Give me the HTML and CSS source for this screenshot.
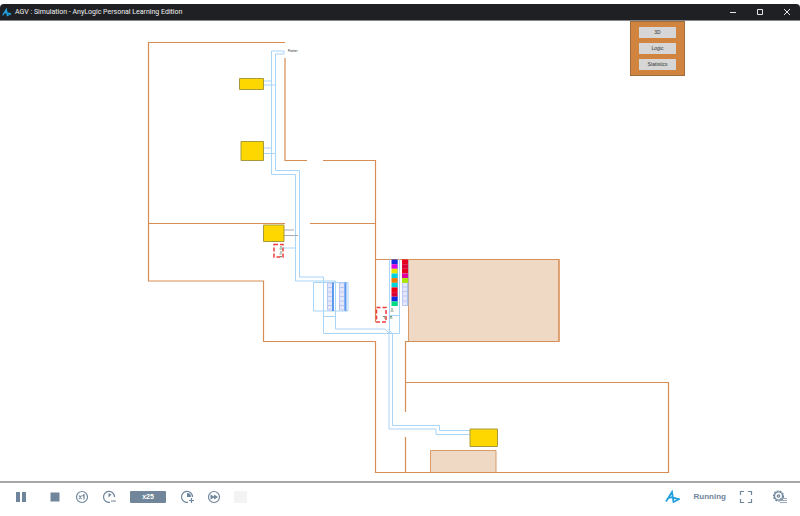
FILE: index.html
```html
<!DOCTYPE html>
<html lang="en">
<head>
  <meta charset="UTF-8">
  <title>AGV : Simulation</title>
  <link rel="stylesheet" href="styles.css">
</head>
<body>

  <header class="titlebar">
    <svg class="logo-small" viewBox="0 0 16 14"><path d="M1 11.5L7 2L8.5 12L14.5 9C10 9 8 6 3.5 8"/></svg>
    <h1>AGV : Simulation - AnyLogic Personal Learning Edition</h1>
    <div class="window-buttons">
      <button aria-label="Minimize"><svg viewBox="0 0 8 8"><path d="M1 4.5h6"/></svg></button>
      <button aria-label="Maximize"><svg viewBox="0 0 8 8"><path d="M1.5 1.5h5v5h-5z"/></svg></button>
      <button aria-label="Close"><svg viewBox="0 0 8 8"><path d="M1 1l6 6M7 1l-6 6"/></svg></button>
    </div>
  </header>

  <main class="stage">
    <svg class="plan" viewBox="0 21 800 460">
      <!-- storage areas -->
      <g class="area">
        <path d="M408.5 259.5H559v82H408.5z"/>
        <path d="M430.5 450.5H496v22h-65.5z"/>
      </g>

      <!-- walls -->
      <g class="wall">
        <path d="M285 42.5H148.5V281H263.5V341.5H375.5V472.5H668.5V382.5H405.5"/>
        <path d="M285 58V160.5H307M323 160.5H375.5V322"/>
        <path d="M148 223.5H285M310 223.5H375"/>
        <path d="M375 259.5H559V341.5H405.5V412M405.5 437V472"/>
      </g>

      <!-- AGV paths -->
      <g class="track">
        <path d="M284 51H271.5V174.5H295.5V281H335.5V329H385L389 333V429H436V434.5H470"/>
        <path d="M284 51V54H275.5V170.5H299.5V277H323.5V333.5H399.5V259"/>
        <path d="M388 329L392.5 334V425.5H439.5V430.5H470"/>
        <path d="M263 81H271M263 85H275M263 148H271M263 153.5H275M283 248H295"/>
        <path d="M313.5 282.5H348V311H313.5zM323 316.5H335M389.5 259V333M389 315.5H399"/>
      </g>
      <path class="dock-line" d="M284 230H294M284 235.5H298"/>

      <!-- stations -->
      <g class="station">
        <path d="M239.5 78.5h24v11h-24z"/>
        <path d="M241 141.5h22.5v19H241z"/>
        <path d="M263.5 225H284v16.5h-20.5z"/>
        <path d="M470 429h27.5v17.5H470z"/>
      </g>

      <!-- racks -->
      <g class="rack">
        <path d="M327.5 283h5v27h-5zM339.5 283h5v27h-5z"/>
        <path d="M327 287.5h6M327 292h6M327 296.5h6M327 301h6M327 305.5h6M339 287.5h6M339 292h6M339 296.5h6M339 301h6M339 305.5h6"/>
        <path class="rack-side" d="M333 282.5V311M345.5 282.5V311"/>
        <path d="M402.5 282.5h5v23h-5zM402 287h6M402 291.5h6M402 296h6M402 301h6"/>
        <path class="rack-edge" d="M408 259.5V306M397.5 259.5V306"/>
      </g>
      <g class="cells">
        <path fill="#1428e0" d="M391.5 259.5h6v4.7h-6z"/>
        <path fill="#dc00dc" d="M391.5 264.2h6v4.6h-6z"/>
        <path fill="#e6e600" d="M391.5 268.8h6v4.7h-6z"/>
        <path fill="#00d2dc" d="M391.5 273.5h6v4.6h-6z"/>
        <path fill="#f07800" d="M391.5 278.1h6v4.7h-6z"/>
        <path fill="#00d2dc" d="M391.5 282.8h6v4.6h-6z"/>
        <path fill="#f00014" d="M391.5 287.4h6v4.7h-6z"/>
        <path fill="#dc0032" d="M391.5 292.1h6v4.6h-6z"/>
        <path fill="#1428e0" d="M391.5 296.7h6v4.7h-6z"/>
        <path fill="#00dc82" d="M391.5 301.4h6v4.6h-6z"/>
        <path fill="#e6001e" d="M402 259.5h6v4.7h-6z"/>
        <path fill="#dc0032" d="M402 264.2h6v4.6h-6z"/>
        <path fill="#e6001e" d="M402 268.8h6v4.7h-6z"/>
        <path fill="#dc00a0" d="M402 273.5h6v4.6h-6z"/>
        <path fill="#aae600" d="M402 278.1h6v4.7h-6z"/>
      </g>

      <!-- worker zones -->
      <path class="zone" d="M274 244.5h9V257h-9zM376.5 307.5h9.5V322h-9.5z"/>
      <path class="worker" d="M280 247h2M279.5 249h3M280 252h2M279.5 254h2M280 256.5h2M391 309h2M390.5 311h3M383 316.5h2M384 318h2M390 316.5h2M389.5 318h3"/>

      <text class="note" x="288" y="52">Pointer</text>
    </svg>

    <nav class="views">
      <button>3D</button>
      <button>Logic</button>
      <button>Statistics</button>
    </nav>
  </main>

  <footer class="toolbar">
    <button aria-label="Pause"><svg viewBox="0 0 14 14"><path class="solid" d="M2 2h4v10H2zM8 2h4v10H8z"/></svg></button>
    <button class="stop" aria-label="Stop"><svg viewBox="0 0 14 14"><path class="solid" d="M2.5 2.5h9v9h-9z"/></svg></button>
    <button aria-label="Real time"><svg viewBox="0 0 14 14"><circle cx="7" cy="7" r="5.5"/><path d="M4 5.5l2.5 3.5M6.5 5.5L4 9M7.5 6L9 4.8V9.5"/></svg></button>
    <button aria-label="Slow down"><svg viewBox="0 0 14 14"><path d="M8 12.3A5.5 5.5 0 1 1 12.5 7M9 11h5"/><path class="solid" d="M6.5 7.5V3.5A4 4 0 0 1 9.5 4.5z"/></svg></button>
    <button class="speed">x25</button>
    <button aria-label="Speed up"><svg viewBox="0 0 14 14"><path d="M8 12.3A5.5 5.5 0 1 1 12.5 7M9 10.5h5M11.5 8v5"/><path class="solid" d="M7 7V3A4 4 0 0 1 11 7z"/></svg></button>
    <button aria-label="Fast forward"><svg viewBox="0 0 14 14"><circle cx="7" cy="7" r="5.5"/><path class="solid" d="M3.5 4.5L7 6.5V4.5L11 7L7 9.5V7.5L3.5 9.5z"/></svg></button>
    <button class="blank" aria-label="Unavailable" disabled></button>
    <a class="logo" href="#" aria-label="AnyLogic"><svg viewBox="0 0 16 14"><path d="M1 11.5L7 2L8.5 12L14.5 9C10 9 8 6 3.5 8"/></svg></a>
    <span class="status">Running</span>
    <button aria-label="Full screen"><svg viewBox="0 0 14 14"><path d="M1.5 5V1.5H5M9 1.5h3.5V5M12.5 9v3.5H9M5 12.5H1.5V9"/></svg></button>
    <button class="settings" aria-label="Settings"><svg viewBox="0 0 14 14"><circle class="teeth" cx="5.5" cy="6" r="5"/><circle cx="5.5" cy="6" r="4"/><circle cx="5.5" cy="6" r="1.2"/><path class="list" d="M7 8.5H14M7 10.5H14M7 12.5H14"/></svg></button>
  </footer>

</body>
</html>
```
FILE: styles.css
```css
body {
  margin: 0;
  padding-top: 4px;
  box-sizing: border-box;
  min-height: 100vh;
  background: white;
  font-family: "Liberation Sans", Arial, sans-serif;
}
button {
  padding: 0;
  border: none;
  background: none;
  font-family: inherit;
}
svg {
  display: block;
  fill: none;
}

.titlebar {
  display: flex;
  align-items: center;
  height: 16px;
  padding: 0 9px 0 2px;
  gap: 3px;
  background: #1f2024;
  border-bottom: 1px solid #85868a;
  border-radius: 4px 4px 0 0;
}
.titlebar h1 {
  margin: 0;
  color: #f0f0f0;
  font: 7px Roboto, sans-serif;
}
.logo-small {
  width: 10px;
  height: 9px;
  stroke: #1fa3e0;
  stroke-width: 2;
}
.window-buttons {
  display: flex;
  gap: 19px;
  margin-left: auto;
}
.window-buttons svg {
  width: 8px;
  height: 8px;
  stroke: #e6e6e6;
}

.stage {
  position: relative;
}
.plan {
  width: 100%;
}
.area { fill: #efd8c4; stroke: #d99a66; }
.wall { stroke: #d88d54; stroke-width: 1.2; }
.track { stroke: #a9d5f9; }
.dock-line { stroke: #a3abb8; }
.station { fill: #ffd700; stroke: #a89a3c; }
.rack { fill: #e6e6fa; stroke: #b9c8f2; }
.rack-side { stroke: #5c9af0; stroke-width: 2; }
.rack-edge { stroke: #8fbdf5; }
.zone { stroke: #f03c3c; stroke-width: 1.5; stroke-dasharray: 4 2; }
.worker { stroke: #6d9474; }
.note {
  fill: #222;
  font-size: 3px;
}

.views {
  position: absolute;
  top: 0;
  left: 78.75%;
  display: flex;
  flex-direction: column;
  gap: 5px;
  padding: 5px 8px;
  background: #d0843f;
  border: 1px solid #a06c3c;
  box-sizing: border-box;
  width: 55px;
}
.views button {
  height: 11px;
  background: #d6d6d6;
  color: #333;
  font-size: 5px;
  line-height: 11px;
}

.toolbar {
  display: flex;
  align-items: center;
  gap: 13px;
  height: 27px;
  padding: 0 13px 0 14px;
  border-top: 2px solid #a5a7a8;
}
.toolbar svg {
  width: 14px;
  height: 14px;
  stroke: #6f859b;
  stroke-width: 1.2;
}
.toolbar .solid {
  fill: #6f859b;
  stroke: none;
}
.toolbar .stop,
.toolbar .settings {
  margin-left: 7px;
}
.toolbar .speed {
  width: 36px;
  height: 12px;
  margin: 0 1px;
  border-radius: 1px;
  background: #71869a;
  color: white;
  font-size: 7px;
  font-weight: bold;
}
.toolbar .blank {
  width: 13px;
  height: 12px;
  background: #f3f3f3;
}
.toolbar .logo {
  margin-left: auto;
}
.toolbar .logo svg {
  width: 16px;
  stroke: #249fdd;
  stroke-width: 1.8;
}
.status {
  color: #6f859b;
  font-size: 8px;
  font-weight: bold;
}
.toolbar .teeth {
  stroke-dasharray: 2 1;
}
.toolbar .list {
  stroke: #9aa9b8;
}
```
